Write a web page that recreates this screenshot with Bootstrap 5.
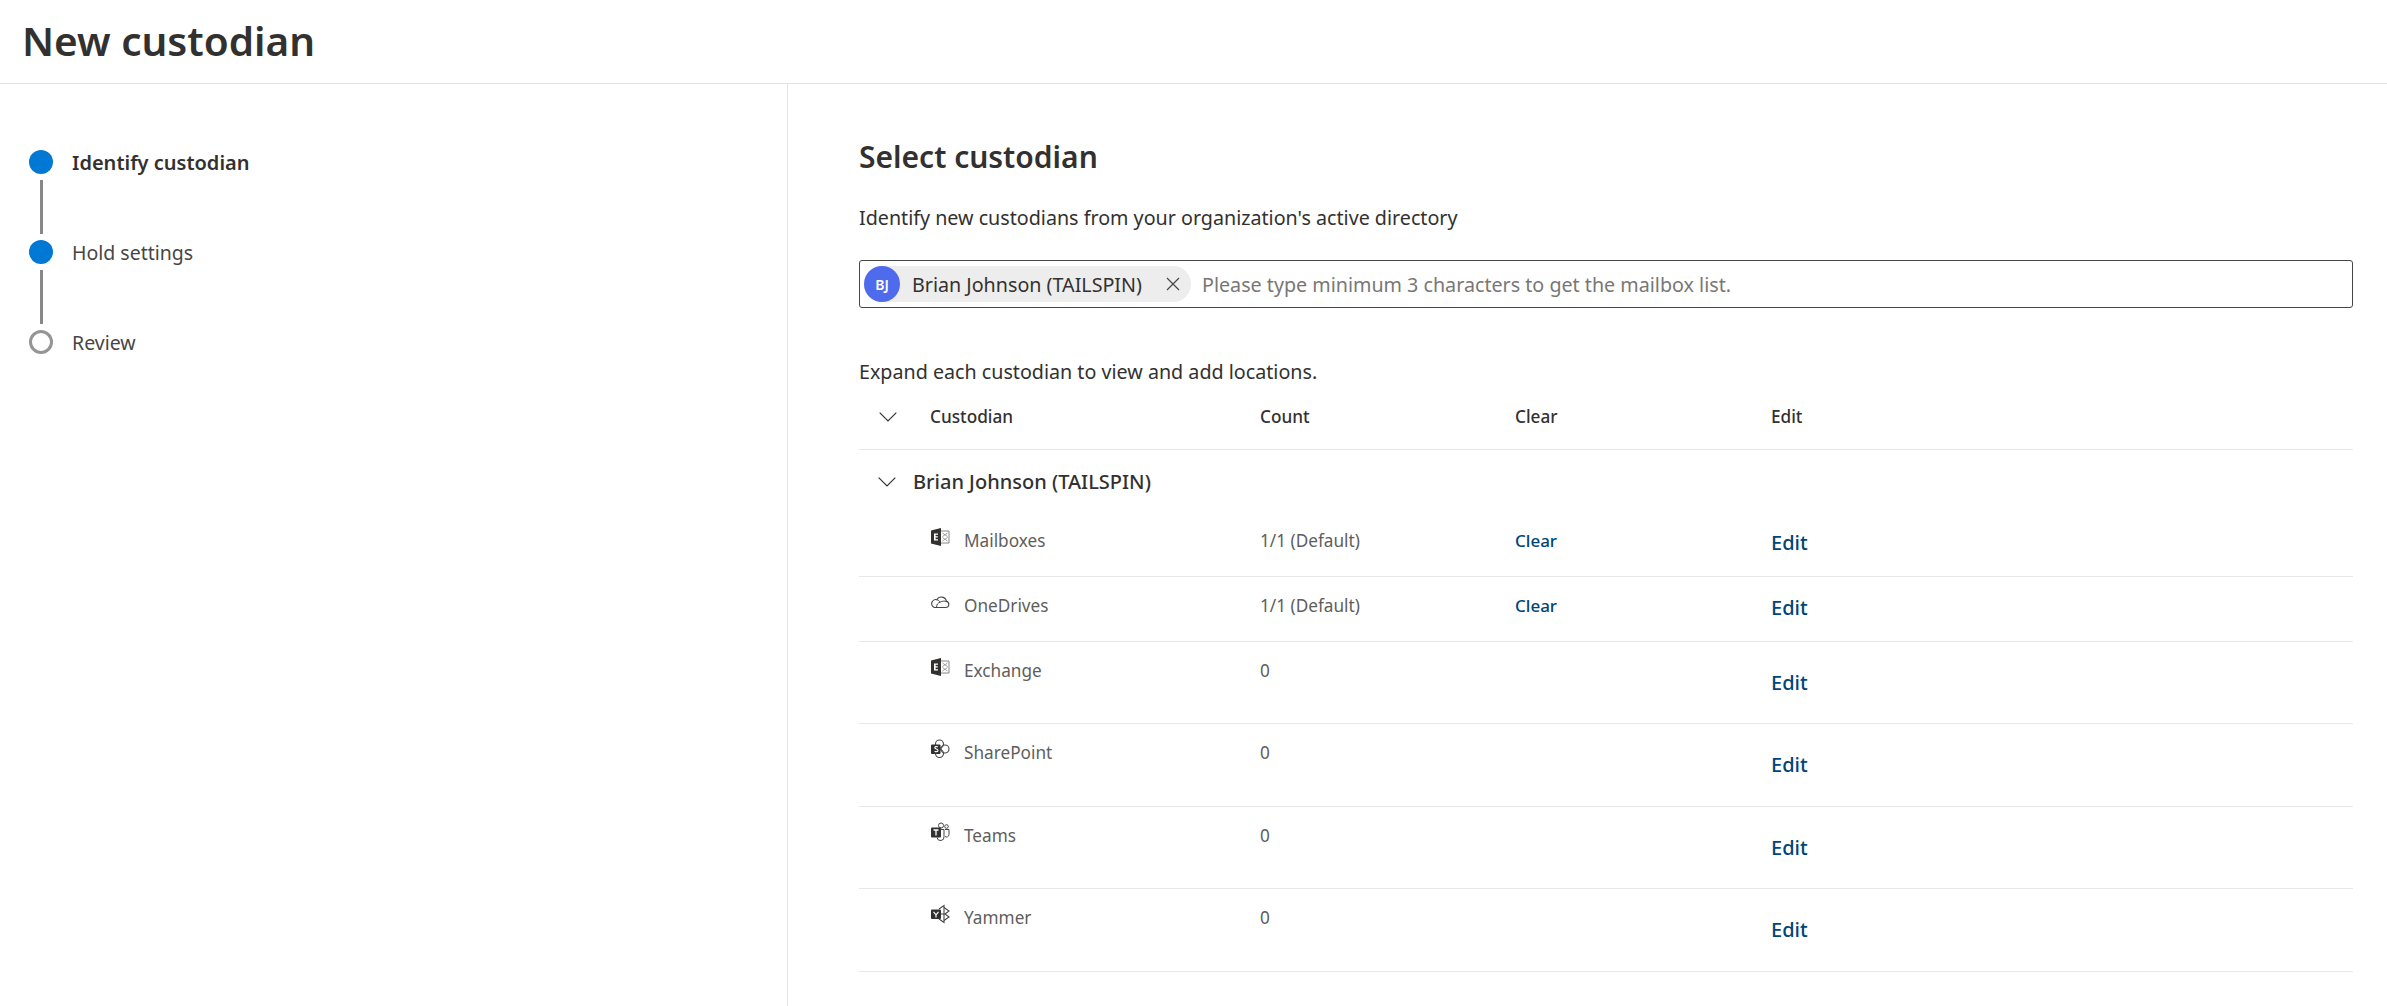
<!DOCTYPE html>
<html lang="en">
<head>
  <meta charset="UTF-8">
  <title>New custodian</title>
  <meta name="viewport" content="width=device-width, initial-scale=1">
  <link href="https://cdn.jsdelivr.net/npm/bootstrap@5.3.0/dist/css/bootstrap.min.css" rel="stylesheet">
  <style>
    body { font-family: "Noto Sans", "Open Sans", sans-serif; color: #323130; background: #fff; height: 1006px; overflow: hidden; }
    .page-head { height: 84px; border-bottom: 1px solid #e3e3e3; padding-left: 22px; }
    .page-head h1 { font-size: 40.5px; font-weight: 600; margin: 0; line-height: 82px; }
    .wizard { width: 788px; height: 922px; border-right: 1px solid #e3e3e3; padding: 66px 0 0 29px; flex: none; }
    .step-item { height: 90px; }
    .step-dot { width: 24px; height: 24px; border-radius: 50%; background: #0078d4; }
    .step-dot.todo { background: #fff; border: 3px solid #979593; }
    .step-line { width: 3px; height: 54px; background: #8a8886; margin: 6px 0 0 10.5px; }
    .step-label { font-size: 19.5px; line-height: 24px; margin-left: 19px; padding-top: 1px; color: #484644; }
    .step-label.on { font-size: 20px; font-weight: 600; color: #323130; }
    .main-pane { padding: 54px 34px 0 71px; flex: 1; min-width: 0; }
    .main-pane h2 { font-size: 30px; font-weight: 600; margin: 0; line-height: 38px; }
    .intro { font-size: 19.7px; line-height: 24px; margin: 30px 0 0; }
    .picker { height: 48px; border: 1px solid #484644; border-radius: 3px; margin-top: 30px; padding-left: 4px; }
    .chip { height: 36px; background: #ededed; border-radius: 18px; width: 327px; flex: none; }
    .chip-avatar { width: 36px; height: 36px; border-radius: 50%; background: #4f6bed; color: #fff; font-size: 14px; font-weight: 600; }
    .chip-name { font-size: 19.7px; margin-left: 12px; padding-top: 1px; }
    .chip-x { margin-left: auto; margin-right: 11px; }
    .picker input { border: 0; outline: 0; flex: 1; font-size: 19.7px; margin-left: 11px; padding: 2px 0 0; font-family: inherit; color: #323130; }
    .picker input::placeholder { color: #797775; opacity: 1; }
    .hint { font-size: 19.7px; line-height: 24px; margin: 52px 0 0; }
    .grid-head { height: 66px; border-bottom: 1px solid #e8e8e8; font-size: 17.2px; font-weight: 500; }
    .cell-toggle { width: 71px; padding-left: 20px; flex: none; }
    .cell-name { width: 330px; flex: none; }
    .cell-count { width: 255px; flex: none; }
    .cell-clear { width: 256px; flex: none; }
    .group-row { height: 62px; font-size: 20px; font-weight: 500; padding-top: 2px; }
    .group-row .group-chev { width: 54px; padding-left: 19px; flex: none; }
    .loc-row { border-bottom: 1px solid #e8e8e8; font-size: 17.2px; color: #605e5c; }
    .loc-row.h-a { height: 65px; }
    .loc-row.h-b { height: 82.4px; }
    .loc-row .cell-name, .loc-row .cell-count, .loc-row .cell-clear { padding-top: 17px; line-height: 24px; }
    .loc-icon { width: 20px; height: 20px; margin-right: 14px; flex: none; position: relative; top: -2px; }
    .act-clear { color: #004578; font-size: 17px; font-weight: 500; text-decoration: none; }
    .act-edit { color: #004578; font-size: 20px; font-weight: 500; text-decoration: none; line-height: 28px; display: block; padding-top: 17px; }
    .h-b .act-edit { padding-top: 27px; }
  </style>
</head>
<body>

  <svg width="0" height="0" class="d-block position-absolute">
    <symbol id="ic-exchange" viewBox="0 0 20 20">
      <path d="M1 3.500 11 1v18L1 16.500z" fill="#323130"/>
      <path d="M4 6.500h4v1.300H5.600v1.500h2.200v1.300H5.600v1.600H8v1.300H4z" fill="#fff"/>
      <path d="M11 4h8v12h-8" fill="none" stroke="#8a8886"/>
      <path d="M12.500 6l5 3.500M17.500 6l-5 3.500M12.500 10.500l5 3.500M17.500 10.500l-5 3.500" fill="none" stroke="#a19f9d"/>
    </symbol>
    <symbol id="ic-onedrive" viewBox="0 0 20 20">
      <path d="M4.500 15.500h11.200a3.100 3.100 0 0 0 .8-6.100A5.200 5.200 0 0 0 6.800 7.800 3.900 3.900 0 0 0 4.500 15.500z" fill="none" stroke="#484644" stroke-width="1.100"/>
      <path d="M6.800 7.800c1.500.2 2.600 1 3.200 2.400 2-1.200 4.700-1.300 6.500-.8M6.500 15c.2-2.600 1.600-4.200 3.500-4.800" fill="none" stroke="#484644"/>
    </symbol>
    <symbol id="ic-sharepoint" viewBox="0 0 20 20">
      <circle cx="9.500" cy="5" r="4" fill="none" stroke="#484644" stroke-width="1.100"/>
      <circle cx="15" cy="10" r="4" fill="none" stroke="#484644" stroke-width="1.100"/>
      <circle cx="9.500" cy="14.500" r="4" fill="none" stroke="#484644" stroke-width="1.100"/>
      <rect x="1" y="5.500" width="9.500" height="9.500" rx="1" fill="#323130"/>
      <path d="M7.800 8c-1-.7-3-.6-3 .7 0 1.500 3.200 1 3.200 2.700 0 1.400-2.300 1.500-3.400.8" fill="none" stroke="#fff" stroke-width="1.100"/>
    </symbol>
    <symbol id="ic-teams" viewBox="0 0 20 20">
      <circle cx="11" cy="3.500" r="2.500" fill="none" stroke="#484644"/>
      <circle cx="16.500" cy="4.500" r="1.800" fill="none" stroke="#484644"/>
      <path d="M9 7.500h5v7a3.500 3.500 0 0 1-7 1" fill="none" stroke="#484644"/>
      <path d="M15 7.500h4v5a2.500 2.500 0 0 1-4 2" fill="none" stroke="#484644"/>
      <rect x="1" y="5.500" width="10" height="10" rx="1" fill="#323130"/>
      <path d="M3.500 8h5M6 8v5.500" fill="none" stroke="#fff" stroke-width="1.300"/>
    </symbol>
    <symbol id="ic-yammer" viewBox="0 0 20 20">
      <path d="M9 5 14 1.500v17L9 15" fill="none" stroke="#484644" stroke-width="1.100"/>
      <path d="M14 3.500 19 7l-4 3 4 3-5 3.500M11 10h4" fill="none" stroke="#484644" stroke-width="1.100"/>
      <rect x="1" y="5.500" width="10" height="9.500" rx="1" fill="#323130"/>
      <path d="M3.500 7.800 6 10.800l2.500-3M6 10.800v2.600" fill="none" stroke="#fff" stroke-width="1.200"/>
    </symbol>
    <symbol id="ic-chev" viewBox="0 0 18 10">
      <path d="M.7.7 9 9l8.300-8.300" fill="none" stroke="#323130" stroke-width="1.200"/>
    </symbol>
  </svg>

  <header class="page-head">
    <h1>New custodian</h1>
  </header>

  <div class="d-flex">
    <!-- Wizard steps -->
    <nav class="wizard">
      <div class="step-item d-flex">
        <div><div class="step-dot"></div><div class="step-line"></div></div>
        <div class="step-label on">Identify custodian</div>
      </div>
      <div class="step-item d-flex">
        <div><div class="step-dot"></div><div class="step-line"></div></div>
        <div class="step-label">Hold settings</div>
      </div>
      <div class="step-item d-flex">
        <div><div class="step-dot todo"></div></div>
        <div class="step-label">Review</div>
      </div>
    </nav>

    <main class="main-pane">
      <h2>Select custodian</h2>
      <p class="intro">Identify new custodians from your organization's active directory</p>

      <div class="picker d-flex align-items-center">
        <div class="chip d-flex align-items-center">
          <span class="chip-avatar d-flex align-items-center justify-content-center">BJ</span>
          <span class="chip-name">Brian Johnson (TAILSPIN)</span>
          <svg class="chip-x" width="14" height="14" viewBox="0 0 14 14"><path d="M1 1l12 12M13 1 1 13" stroke="#484644" stroke-width="1.200"/></svg>
        </div>
        <input type="text" placeholder="Please type minimum 3 characters to get the mailbox list.">
      </div>

      <p class="hint">Expand each custodian to view and add locations.</p>

      <div class="grid-head d-flex align-items-center">
        <div class="cell-toggle"><svg class="d-block" width="18" height="10"><use href="#ic-chev"/></svg></div>
        <div class="cell-name">Custodian</div>
        <div class="cell-count">Count</div>
        <div class="cell-clear">Clear</div>
        <div>Edit</div>
      </div>

      <div class="group-row d-flex align-items-center">
        <div class="group-chev"><svg class="d-block" width="18" height="10"><use href="#ic-chev"/></svg></div>
        <div>Brian Johnson (TAILSPIN)</div>
      </div>

      <div id="locRows"></div>
    </main>
  </div>

  <script>
    const locations = [
      { name: 'Mailboxes', icon: 'exchange', count: '1/1 (Default)', clear: true },
      { name: 'OneDrives', icon: 'onedrive', count: '1/1 (Default)', clear: true },
      { name: 'Exchange', icon: 'exchange', count: '0' },
      { name: 'SharePoint', icon: 'sharepoint', count: '0' },
      { name: 'Teams', icon: 'teams', count: '0' },
      { name: 'Yammer', icon: 'yammer', count: '0' }
    ];

    document.getElementById('locRows').innerHTML = locations.map(loc => `
      <div class="loc-row d-flex ${loc.clear ? 'h-a' : 'h-b'}">
        <div class="cell-toggle"></div>
        <div class="cell-name d-flex align-items-start">
          <svg class="loc-icon"><use href="#ic-${loc.icon}"/></svg>
          <span>${loc.name}</span>
        </div>
        <div class="cell-count">${loc.count}</div>
        <div class="cell-clear">${loc.clear ? '<a href="#" class="act-clear">Clear</a>' : ''}</div>
        <div><a href="#" class="act-edit">Edit</a></div>
      </div>
    `).join('');
  </script>
  <script src="https://cdn.jsdelivr.net/npm/bootstrap@5.3.0/dist/js/bootstrap.bundle.min.js"></script>
</body>
</html>
